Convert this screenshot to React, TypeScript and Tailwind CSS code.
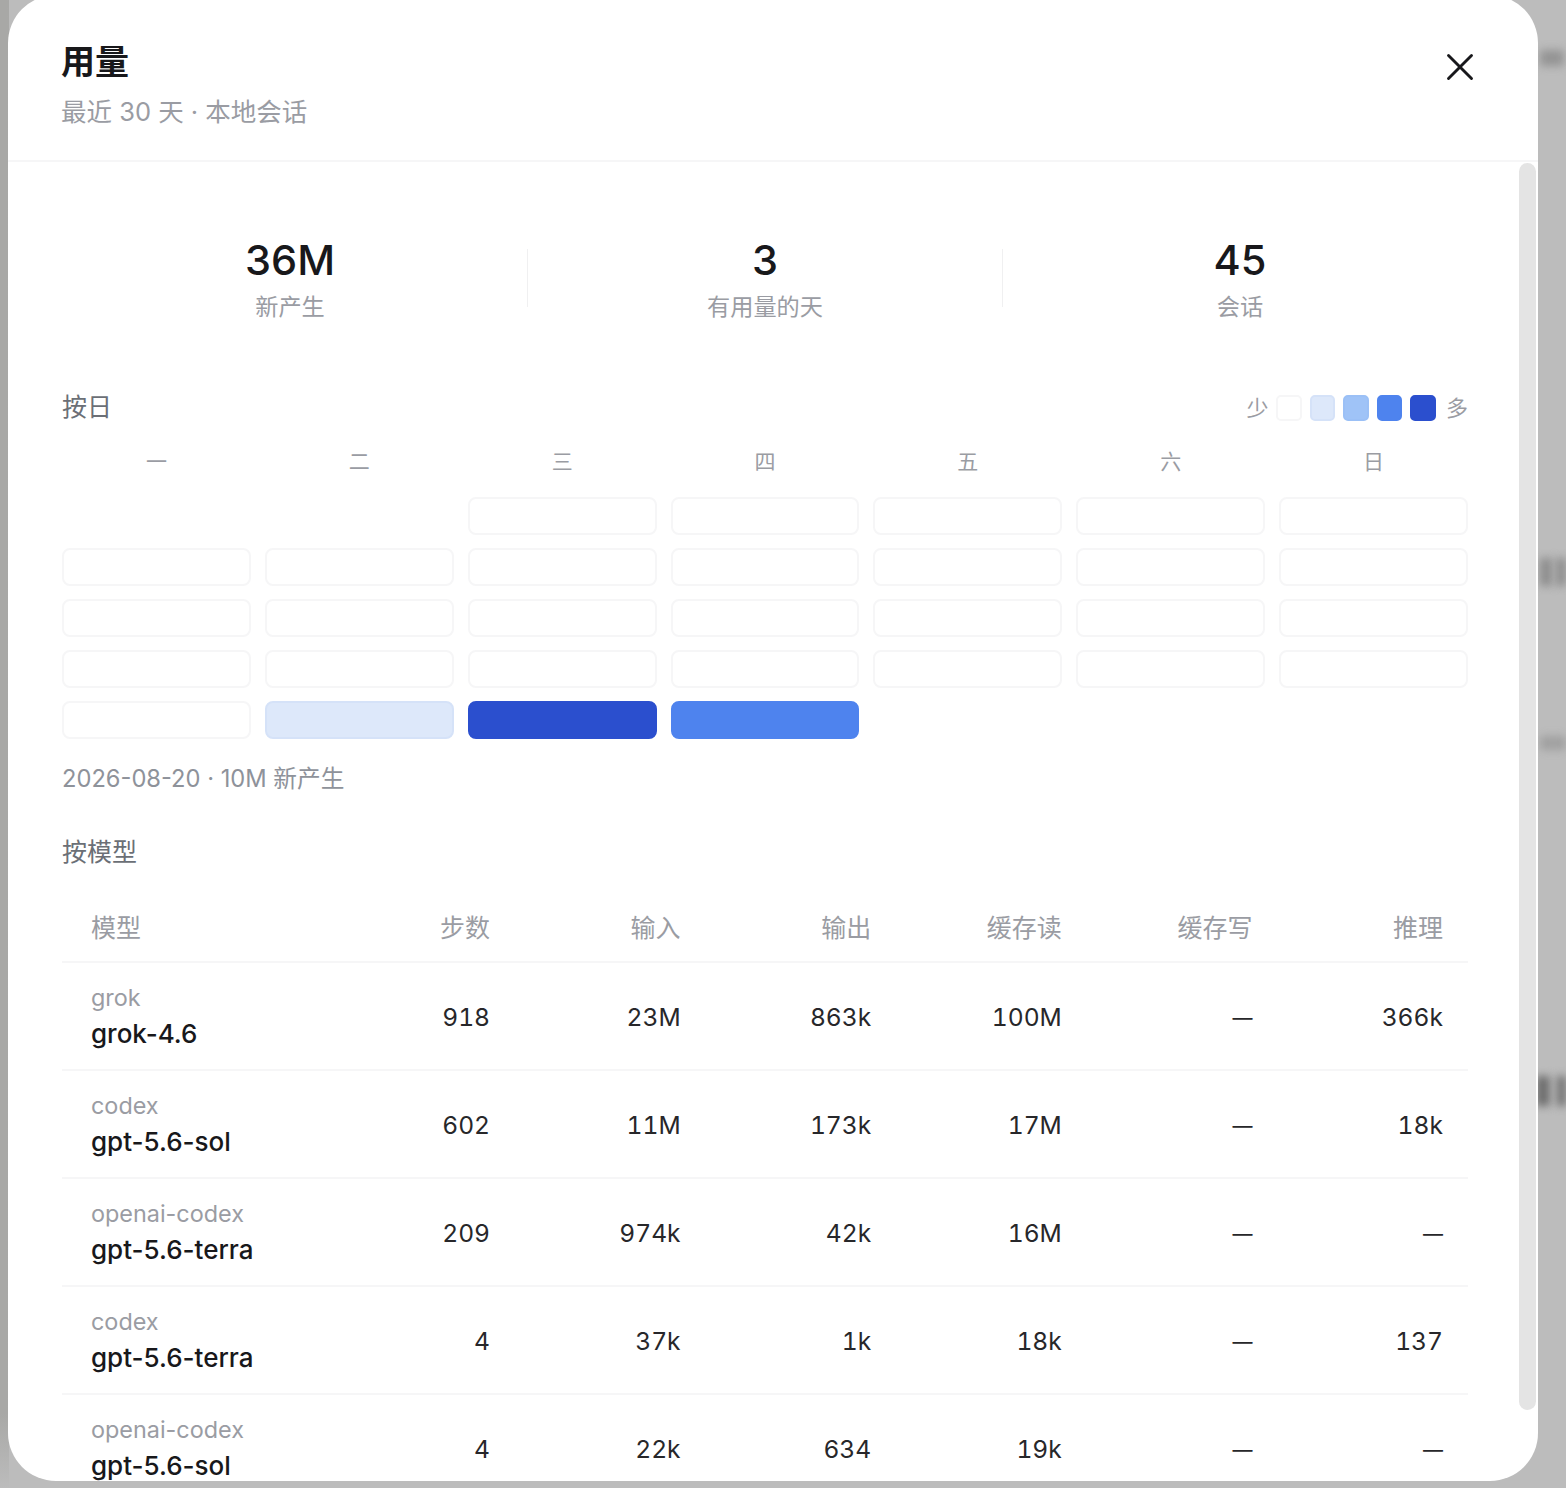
import { Fragment } from 'react';
import { X } from 'lucide-react';

const weekdays = ['一', '二', '三', '四', '五', '六', '日'];

// 0 = empty slot, 1-5 = heat level
const calendar = [
  0, 0, 1, 1, 1, 1, 1,
  1, 1, 1, 1, 1, 1, 1,
  1, 1, 1, 1, 1, 1, 1,
  1, 1, 1, 1, 1, 1, 1,
  1, 2, 5, 4, 0, 0, 0,
];

const levelClass: Record<number, string> = {
  0: '',
  1: 'bg-white border-2 border-[#f6f6f7]',
  2: 'bg-[#dde8fa] border-2 border-[#d5e2f8]',
  3: 'bg-[#9fc3f7] border-2 border-[#9bc0f6]',
  4: 'bg-[#4e83ee] border-2 border-[#4e83ee]',
  5: 'bg-[#2b4fce] border-2 border-[#2b4fce]',
};

const stats = [
  { value: '36M', label: '新产生' },
  { value: '3', label: '有用量的天' },
  { value: '45', label: '会话' },
];

const columns = ['步数', '输入', '输出', '缓存读', '缓存写', '推理'];

const rows = [
  { provider: 'grok', model: 'grok-4.6', cells: ['918', '23M', '863k', '100M', '—', '366k'] },
  { provider: 'codex', model: 'gpt-5.6-sol', cells: ['602', '11M', '173k', '17M', '—', '18k'] },
  { provider: 'openai-codex', model: 'gpt-5.6-terra', cells: ['209', '974k', '42k', '16M', '—', '—'] },
  { provider: 'codex', model: 'gpt-5.6-terra', cells: ['4', '37k', '1k', '18k', '—', '137'] },
  { provider: 'openai-codex', model: 'gpt-5.6-sol', cells: ['4', '22k', '634', '19k', '—', '—'] },
];

function Swatch({ level }: { level: number }) {
  return <div className={`w-[25.5px] h-[26px] rounded-[5px] ${levelClass[level]}`} />;
}

export default function App() {
  return (
    <div className="relative h-[1488px] overflow-hidden bg-[#bcbcbc] font-['Inter','Noto_Sans_CJK_SC',sans-serif]">
      {/* Blurred page behind the dialog */}
      <div className="absolute left-0 top-0 w-[9px] h-[1488px] bg-linear-to-b from-[#a8a8a6] via-[#a8a8a6] via-[95%] to-[#bcbcbc]" />
      <div className="absolute left-[1540px] top-[50px] w-[24px] h-[16px] bg-[#949494] blur-[4px]" />
      <div className="absolute left-[1540px] top-[558px] w-[12px] h-[28px] bg-[#8c8c8c] blur-[4px]" />
      <div className="absolute left-[1556px] top-[558px] w-[10px] h-[28px] bg-[#8c8c8c] blur-[4px]" />
      <div className="absolute left-[1540px] top-[736px] w-[26px] h-[14px] bg-[#a0a0a0] blur-[4px]" />
      <div className="absolute left-[1536px] top-[1076px] w-[14px] h-[30px] bg-[#6e6e6e] blur-[4px]" />
      <div className="absolute left-[1557px] top-[1076px] w-[9px] h-[30px] bg-[#6e6e6e] blur-[4px]" />

      <div className="relative ml-[8px] -mt-[5px] w-[1530px] h-[1486px] rounded-[48px] bg-white overflow-hidden flex flex-col">
        {/* Header */}
        <div className="h-[167px] shrink-0 border-b-2 border-[#f6f6f7] pl-[53px] pr-[55px] pt-[45px] flex justify-between items-start">
          <div>
            <h1 className="text-[34px] leading-[44px] font-semibold text-[#18181b]">用量</h1>
            <p className="mt-[10px] text-[25.5px] leading-[36px] text-[#9a9ca3]">最近 30 天 · 本地会话</p>
          </div>
          <X size={46} strokeWidth={1.5} className="text-[#18181b] mt-[4px]" />
        </div>

        {/* Body */}
        <div className="relative flex-1 overflow-hidden pl-[54px] pr-[70px] pt-[71px]">
          <div className="absolute right-[2px] top-[1px] w-[17px] h-[1247px] rounded-full bg-[#e4e4e4]" />

          <div className="-ml-[9px] flex items-center w-[1424px]">
            {stats.map((s, i) => (
              <Fragment key={s.label}>
                {i > 0 && <div className="w-[1px] h-[58px] -mt-[2px] shrink-0 bg-[#f0f0f1]" />}
                <div className="flex-1 flex flex-col items-center">
                  <div className="text-[41.5px] leading-[54px] font-medium text-[#18181b]">{s.value}</div>
                  <div className="mt-[3px] text-[23.2px] leading-[34px] text-[#9a9ca3]">{s.label}</div>
                </div>
              </Fragment>
            ))}
          </div>

          {/* By day */}
          <div className="mt-[67px] flex justify-between items-center h-[34px]">
            <span className="text-[25px] text-[#6b6f76]">按日</span>
            <div className="flex items-center gap-[8px] text-[22px] text-[#9a9ca3]">
              <span>少</span>
              <Swatch level={1} />
              <Swatch level={2} />
              <Swatch level={3} />
              <Swatch level={4} />
              <Swatch level={5} />
              <span className="ml-[2px]">多</span>
            </div>
          </div>

          <div className="mt-[22px] grid grid-cols-7 gap-x-[14px] text-center text-[21px] leading-[30px] text-[#9a9ca3]">
            {weekdays.map((d) => (
              <div key={d}>{d}</div>
            ))}
          </div>

          <div className="mt-[20px] grid grid-cols-7 gap-x-[14px] gap-y-[13px]">
            {calendar.map((level, i) => (
              <div key={i} className={`h-[38px] rounded-[8px] ${levelClass[level]}`} />
            ))}
          </div>

          <p className="mt-[23px] text-[23.7px] leading-[34px] text-[#8e929a]">2026-08-20 · 10M 新产生</p>

          {/* By model */}
          <h2 className="mt-[38px] text-[25px] leading-[36px] text-[#6b6f76]">按模型</h2>

          <div className="mt-[23px]">
            <div className="h-[70px] pt-[4px] grid grid-cols-[1fr_repeat(6,190.6px)] items-center text-[25px] text-[#9a9ca3] border-b-2 border-[#f6f6f7]">
              <div className="pl-[29px]">模型</div>
              {columns.map((c) => (
                <div key={c} className="text-right pr-[25px]">{c}</div>
              ))}
            </div>
            {rows.map((r, i) => (
              <div
                key={i}
                className="h-[108px] grid grid-cols-[1fr_repeat(6,190.6px)] items-center border-b-2 border-[#f6f6f7] text-[24.6px] text-[#27272a]"
              >
                <div className="pl-[29px] pb-[1px] flex flex-col">
                  <span className="text-[23.4px] leading-[36px] text-[#9a9ca3]">{r.provider}</span>
                  <span className="text-[26px] leading-[36px] font-medium text-[#18181b]">{r.model}</span>
                </div>
                {r.cells.map((c, j) => (
                  <div key={j} className={`text-right pr-[25px] pt-[3px] tabular-nums ${c === '—' ? 'text-[20px]' : ''}`}>{c}</div>
                ))}
              </div>
            ))}
          </div>
        </div>
      </div>
    </div>
  );
}
